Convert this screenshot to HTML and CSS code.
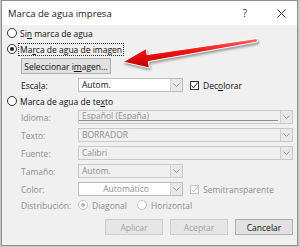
FILE: index.html
```html
<!DOCTYPE html>
<html lang="es">
<head>
  <meta charset="UTF-8" />
  <title>Marca de agua impresa</title>
  <link rel="stylesheet" href="styles.css">
</head>
<body>

<div class="dialog">
  <!-- Barra de título -->
  <div class="titlebar">
    <span class="title">Marca de agua impresa</span>
    <span class="help">?</span>
    <svg class="close" width="9" height="9" viewBox="0 0 9 9"><path d="M0.5 0.5 L8.5 8.5 M8.5 0.5 L0.5 8.5" /></svg>
  </div>

  <div class="content">
    <label class="radio-row"><span class="radio"></span><span>Si<u>n</u> marca de agua</span></label>
    <label class="radio-row focused"><span class="radio checked"></span><span class="focus">Ma<u>r</u>ca de agua de imagen</span></label>
    <div class="indent"><button class="btn select-btn">Seleccionar i<u>m</u>agen...</button></div>

    <div class="field">
      <span class="label">Esca<u>l</u>a:</span>
      <div class="combo short white"><span class="value">Autom.</span><span class="drop"><svg width="7" height="4" viewBox="0 0 7 4"><polyline points="0.5,0.5 3.5,3.5 6.5,0.5" /></svg></span></div>
      <span class="check"><svg width="9" height="9" viewBox="0 0 9 9"><polyline points="1.5,4.5 3.5,6.8 7.8,1.5" /></svg></span>
      <span class="check-text">Dec<u>o</u>lorar</span>
    </div>

    <label class="radio-row"><span class="radio"></span><span>Marca de agua de te<u>x</u>to</span></label>

    <div class="field disabled">
      <span class="label">Idioma:</span>
      <div class="combo full"><span class="value edit">Español (España)</span><span class="drop"><svg width="7" height="4" viewBox="0 0 7 4"><polyline points="0.5,0.5 3.5,3.5 6.5,0.5" /></svg></span></div>
    </div>
    <div class="field disabled">
      <span class="label">Texto:</span>
      <div class="combo full"><span class="value">BORRADOR</span><span class="drop"><svg width="7" height="4" viewBox="0 0 7 4"><polyline points="0.5,0.5 3.5,3.5 6.5,0.5" /></svg></span></div>
    </div>
    <div class="field disabled">
      <span class="label">Fuente:</span>
      <div class="combo full"><span class="value">Calibri</span><span class="drop"><svg width="7" height="4" viewBox="0 0 7 4"><polyline points="0.5,0.5 3.5,3.5 6.5,0.5" /></svg></span></div>
    </div>
    <div class="field disabled">
      <span class="label">Tamaño:</span>
      <div class="combo short"><span class="value">Autom.</span><span class="drop"><svg width="7" height="4" viewBox="0 0 7 4"><polyline points="0.5,0.5 3.5,3.5 6.5,0.5" /></svg></span></div>
    </div>
    <div class="field disabled">
      <span class="label">Color:</span>
      <div class="combo short white"><span class="value center">Automático</span><span class="drop"><svg width="7" height="4" viewBox="0 0 7 4"><polyline points="0.5,0.5 3.5,3.5 6.5,0.5" /></svg></span></div>
      <span class="check"><svg width="9" height="9" viewBox="0 0 9 9"><polyline points="1.5,4.5 3.5,6.8 7.8,1.5" /></svg></span>
      <span class="check-text">Semitransparente</span>
    </div>
    <div class="dist disabled">
      <span class="label">Distribución:</span>
      <span class="radio checked"></span><span class="opt">Diagonal</span>
      <span class="radio"></span><span class="opt">Horizontal</span>
    </div>
  </div>

  <div class="buttons">
    <button class="btn disabled">Aplicar</button>
    <button class="btn disabled">Aceptar</button>
    <button class="btn">Cancelar</button>
  </div>
</div>

<!-- flecha roja encima del diálogo -->
<svg class="arrow" width="300" height="247" viewBox="0 0 300 247">
  <defs>
    <linearGradient id="red" x1="0" y1="0" x2="0" y2="1">
      <stop offset="0" stop-color="#ff6a6a" />
      <stop offset="0.45" stop-color="#ee1111" />
      <stop offset="1" stop-color="#c00000" />
    </linearGradient>
  </defs>
  <polygon points="123,62 146.2,48.5 147,54.6 257,38.5 257.4,42 148.4,61.6 149.4,68" fill="url(#red)" stroke="#fff" stroke-width="1" stroke-linejoin="round" />
</svg>

</body>
</html>
```

FILE: styles.css
```css
* {
  margin: 0; padding: 0; box-sizing: border-box;
}
body {
  font-family: 'Open Sans', 'Noto Sans', sans-serif;
  font-size: 8.5px;
  color: #111;
  background: #c9c9c9;
  width: 300px;
  height: 247px;
  overflow: hidden;
  position: relative;
}
u {
  text-decoration: underline;
  text-underline-offset: 1px;
}
.dialog {
  width: 297px;
  height: 246px;
  margin-left: 1px;
  border: 1px solid #8e8e8e;
  background: #f0f0f0;
  display: flex;
  flex-direction: column;
}
.titlebar {
  height: 24px;
  background: white;
  display: flex;
  align-items: center;
  padding: 0 11px 0 6px;
}
.title {
  font-size: 9.5px;
  color: #222;
}
.help {
  margin-left: auto;
  width: 10px;
  text-align: center;
  font-size: 10px;
  color: #333;
}
.close {
  margin-left: 27px;
}
.close path {
  stroke: #333;
  stroke-width: 1;
  fill: none;
}
.content {
  padding: 1px 4px 0 5px;
  display: flex;
  flex-direction: column;
  gap: 2px;
}
.radio-row {
  height: 14px;
  display: flex;
  align-items: center;
  gap: 3px;
}
.radio-row.focused {
  gap: 1px;
}
.focus {
  border: 1px dotted #333;
  padding: 0 1px;
  line-height: 11px;
}
.radio {
  width: 10px;
  height: 10px;
  border: 1px solid #333;
  border-radius: 50%;
  background: white;
  position: relative;
  flex-shrink: 0;
}
.radio.checked::after {
  content: '';
  position: absolute;
  left: 2px;
  top: 2px;
  width: 4px;
  height: 4px;
  border-radius: 50%;
  background: #222;
}
.indent {
  padding-left: 14px;
}
.btn {
  font-family: inherit;
  font-size: 8.5px;
  color: #111;
  background: #e1e1e1;
  border: 1px solid #adadad;
  width: 58px;
  height: 16px;
}
.select-btn {
  width: 90px;
}
.btn.disabled {
  color: #a3a3a3;
  border-color: #cdcdcd;
  background: #e6e6e6;
}
.field {
  height: 14px;
  display: flex;
  align-items: center;
  padding-left: 14px;
}
.field + .field,
.indent + .field {
  margin-top: 2px;
}
.label {
  width: 57px;
  flex-shrink: 0;
}
.combo {
  height: 14px;
  border: 1px solid #c9c9c9;
  background: #f0f0f0;
  display: flex;
  align-items: stretch;
}
.combo.short {
  width: 105px;
}
.combo.full {
  flex: 1;
}
.combo.white {
  background: white;
  border-color: #bdbdbd;
}
.value {
  flex: 1;
  padding-left: 3px;
  line-height: 12px;
  white-space: nowrap;
}
.value.center {
  text-align: center;
}
.value.edit {
  border-bottom: 1px solid #8c8c8c;
  margin: 0 2px 2px 0;
  line-height: 10px;
}
.drop {
  width: 12px;
  border-left: 1px solid #cfcfcf;
  background: #e8e8e8;
  display: flex;
  align-items: center;
  justify-content: center;
}
.drop polyline {
  fill: none;
  stroke: #9a9a9a;
  stroke-width: 1;
}
.check {
  width: 9px;
  height: 9px;
  margin-left: 7px;
  border: 1px solid #333;
  background: white;
  display: flex;
}
.check svg {
  margin: -1px;
}
.check polyline {
  fill: none;
  stroke: #222;
  stroke-width: 1;
}
.check-text {
  margin-left: 4px;
}
.disabled {
  color: #8e8e8e;
}
.disabled .check {
  border-color: #c4c4c4;
}
.disabled .check polyline {
  stroke: #b5b5b5;
}
.disabled .radio {
  border-color: #c4c4c4;
}
.disabled .radio.checked::after {
  background: #b5b5b5;
}
.dist {
  height: 14px;
  display: flex;
  align-items: center;
  padding-left: 14px;
}
.dist .opt {
  margin-left: 4px;
  margin-right: 4px;
  width: 41px;
}
.buttons {
  margin-top: 7px;
  padding-right: 4px;
  display: flex;
  justify-content: flex-end;
  gap: 7px;
}
.arrow {
  position: absolute;
  left: 0;
  top: 0;
  filter: drop-shadow(1px 2px 1px rgba(0, 0, 0, 0.35));
}
```
